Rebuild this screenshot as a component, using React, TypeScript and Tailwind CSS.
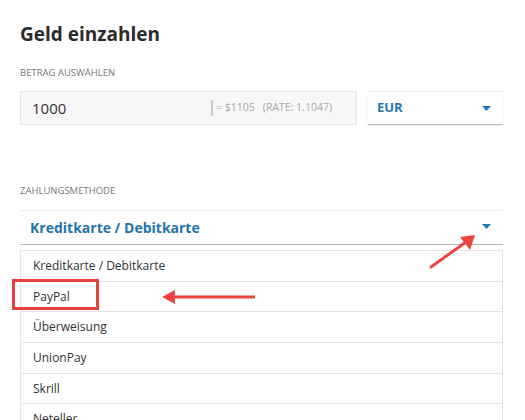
import React from "react";

const methods = ["Kreditkarte / Debitkarte", "PayPal", "Überweisung", "UnionPay", "Skrill", "Neteller"];

function Caret() {
  return (
    <svg width="9" height="5" viewBox="0 0 9 5" className="shrink-0">
      <path d="M0 0 H9 L4.5 5 Z" fill="#2574a9" />
    </svg>
  );
}

export default function App() {
  return (
    <div
      className="relative w-[525px] h-[420px] overflow-hidden bg-white pl-[20px] pr-[22px]"
      style={{ fontFamily: '"Open Sans", "Liberation Sans", sans-serif' }}
    >
      <h1 className="pt-[21px] text-[19px] font-bold leading-[26px] text-[#2b2b2b]">Geld einzahlen</h1>

      <div className="mt-[19px] text-[9.5px] uppercase leading-[14px] text-[#777]">Betrag auswählen</div>

      <div className="mt-[11px] flex gap-[11px]">
        <div className="flex h-[34px] w-[337px] items-center border border-[#e6e6e6] bg-[#f7f7f7] pl-[11px] pr-[24px]">
          <span className="text-[15px] text-[#333]">1000</span>
          <span className="ml-auto flex items-center text-[10.5px] text-[#aaa]">
            <span className="mr-[3px] h-[16px] w-[2px] bg-[#ccc]" />
            = $1105 <span className="ml-[8px]">(RATE: 1.1047)</span>
          </span>
        </div>
        <div className="flex h-[34px] flex-1 items-center border-t border-b border-t-[#f0f0f0] border-b-[#bbb] pl-[9px] pr-[12px] shadow-[0_1px_2px_rgba(0,0,0,0.08)]">
          <span className="text-[13px] font-bold text-[#2574a9]">EUR</span>
          <span className="ml-auto"><Caret /></span>
        </div>
      </div>

      <div className="mt-[59px] text-[9.5px] uppercase leading-[14px] text-[#777]">Zahlungsmethode</div>

      <div className="mt-[12px] flex h-[35px] items-center border-t border-b border-t-[#eee] border-b-[#bbb] pl-[10px] pr-[12px]">
        <span className="text-[14px] font-bold text-[#2574a9]">Kreditkarte / Debitkarte</span>
        <span className="ml-auto -mt-[3px]"><Caret /></span>
      </div>

      <div className="mt-[5px] border-x border-t border-[#e4e4e4]">
        {methods.map((m) => (
          <div key={m} className="flex h-[30.7px] items-center border-b border-[#e4e4e4] pl-[12px] text-[12px] text-[#333]">
            {m}
          </div>
        ))}
      </div>

      <div className="absolute left-[12px] top-[279px] h-[31px] w-[87px] border-[3px] border-[#e8403d]" />

      <svg className="absolute left-0 top-0" width="525" height="420" viewBox="0 0 525 420">
        <line x1="255" y1="297" x2="172" y2="297" stroke="#ec4541" strokeWidth="3" />
        <path d="M162 297 L175 290 L175 304 Z" fill="#ec4541" />
        <line x1="431" y1="267" x2="466" y2="242" stroke="#ec4541" strokeWidth="3" strokeLinecap="round" />
        <path d="M475 235 L470 250 L460 237 Z" fill="#ec4541" />
      </svg>
    </div>
  );
}
